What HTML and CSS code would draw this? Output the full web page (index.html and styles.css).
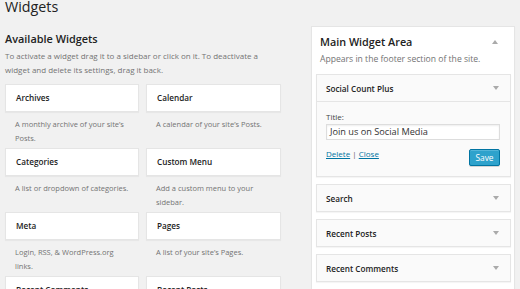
FILE: index.html
```html
<!DOCTYPE html>
<html>
<head>
<meta charset="utf-8">
<link rel="stylesheet" href="styles.css">
</head>
<body>
<h1 class="page-title">Widgets</h1>
<div class="columns">
  <div class="available">
    <h2 class="avail-title">Available Widgets</h2>
    <p class="avail-desc">To activate a widget drag it to a sidebar or click on it. To deactivate a widget and delete its settings, drag it back.</p>
    <div class="grid">
      <div class="item"><div class="card">Archives</div><div class="desc">A monthly archive of your site’s Posts.</div></div>
      <div class="item"><div class="card">Calendar</div><div class="desc">A calendar of your site’s Posts.</div></div>
      <div class="item"><div class="card">Categories</div><div class="desc">A list or dropdown of categories.</div></div>
      <div class="item"><div class="card">Custom Menu</div><div class="desc">Add a custom menu to your sidebar.</div></div>
      <div class="item"><div class="card">Meta</div><div class="desc">Login, RSS, &amp; WordPress.org links.</div></div>
      <div class="item"><div class="card">Pages</div><div class="desc">A list of your site’s Pages.</div></div>
      <div class="item"><div class="card">Recent Comments</div><div class="desc">Your site’s most recent comments.</div></div>
      <div class="item"><div class="card">Recent Posts</div><div class="desc">Your site’s most recent Posts.</div></div>
    </div>
  </div>
  <div class="sidebar">
    <div class="sb-head">
      <div class="sb-title-row"><h2 class="sb-title">Main Widget Area</h2><span class="arrow-up"></span></div>
      <p class="sb-desc">Appears in the footer section of the site.</p>
    </div>
    <div class="widget open">
      <div class="w-top"><span>Social Count Plus</span><span class="arrow-down"></span></div>
      <div class="w-body">
        <label class="w-label">Title:</label>
        <div class="w-input">Join us on Social Media</div>
        <div class="w-actions">
          <div class="links"><a href="#">Delete</a> | <a href="#">Close</a></div>
          <button class="save">Save</button>
        </div>
      </div>
    </div>
    <div class="widget"><div class="w-top"><span>Search</span><span class="arrow-down"></span></div></div>
    <div class="widget"><div class="w-top"><span>Recent Posts</span><span class="arrow-down"></span></div></div>
    <div class="widget"><div class="w-top"><span>Recent Comments</span><span class="arrow-down"></span></div></div>
    <div class="widget"><div class="w-top"><span>Archives</span><span class="arrow-down"></span></div></div>
  </div>
</div>
</body>
</html>
```
FILE: styles.css
```css
html, body {
  margin: 0;
  padding: 0;
  background: #f1f1f1;
  font-family: "Open Sans", "DejaVu Sans", sans-serif;
  color: #444;
  overflow: hidden;
  height: 289px;
}
body {
  padding-left: 5px;
}
.page-title {
  margin: 0;
  font-size: 14.3px;
  font-weight: 400;
  line-height: 14px;
  color: #222;
}
.columns {
  display: flex;
  margin-top: 12px;
  align-items: flex-start;
}
.available {
  width: 276px;
}
.avail-title {
  margin: 5px 0 0;
  font-size: 10.9px;
  font-weight: 600;
  line-height: 15px;
  color: #222;
}
.avail-desc {
  margin: 3px 0 0;
  font-size: 8px;
  line-height: 14px;
  color: #737373;
}
.grid {
  margin-top: 7px;
  display: grid;
  grid-template-columns: 134px 135px;
  column-gap: 7px;
}
.card {
  height: 26px;
  line-height: 26px;
  padding: 0 10px;
  background: #fff;
  border: 1px solid #e5e5e5;
  box-shadow: 0 1px 1px rgba(0,0,0,0.04);
  font-size: 8.2px;
  font-weight: 600;
  color: #222;
}
.desc {
  margin: 5px 0 3px;
  padding: 0 9px 0 10px;
  min-height: 28px;
  font-size: 7.5px;
  line-height: 14px;
  color: #737373;
}
.sidebar {
  margin-left: 30px;
  width: 195px;
  padding: 0 3px 0 4px;
  background: #fff;
  border: 1px solid #e5e5e5;
  box-shadow: 0 1px 1px rgba(0,0,0,0.04);
  height: 300px;
}
.sb-head {
  padding: 7px 10px 0 4px;
}
.sb-title-row {
  display: flex;
  justify-content: space-between;
  align-items: center;
}
.sb-title {
  margin: 0;
  font-size: 10.8px;
  font-weight: 600;
  line-height: 15px;
  color: #222;
}
.arrow-up {
  width: 0;
  height: 0;
  border-left: 3px solid transparent;
  border-right: 3px solid transparent;
  border-bottom: 4px solid #aaa;
  margin-right: 3px;
}
.sb-desc {
  margin: 3px 0 0;
  font-size: 8.6px;
  line-height: 14px;
  color: #737373;
}
.widget {
  margin-top: 7px;
  background: #fafafa;
  border: 1px solid #e5e5e5;
  box-shadow: 0 1px 1px rgba(0,0,0,0.04);
}
.sb-head + .widget {
  margin-top: 8px;
}
.w-top {
  height: 26px;
  padding: 0 11px 0 9px;
  display: flex;
  justify-content: space-between;
  align-items: center;
  font-size: 8.2px;
  font-weight: 600;
  color: #222;
}
.arrow-down {
  width: 0;
  height: 0;
  border-left: 3px solid transparent;
  border-right: 3px solid transparent;
  border-top: 4px solid #aaa;
}
.w-body {
  border-top: 1px solid #e5e5e5;
  padding: 9px 10px 10px 9px;
}
.w-label {
  display: block;
  font-size: 8px;
  line-height: 12px;
  color: #444;
}
.w-input {
  margin-top: 1px;
  height: 14px;
  line-height: 14px;
  padding: 0 3px;
  border: 1px solid #ddd;
  background: #fff;
  box-shadow: inset 0 1px 2px rgba(0,0,0,0.07);
  font-size: 9.2px;
  color: #333;
}
.w-actions {
  margin-top: 7px;
  display: flex;
  justify-content: space-between;
  align-items: flex-start;
}
.links {
  font-size: 8px;
  line-height: 14px;
  color: #666;
}
.links a {
  color: #0074a2;
  text-decoration: underline;
}
.save {
  margin-top: 2px;
  height: 17px;
  width: 31px;
  padding: 0;
  background: #2ea2cc;
  border: 1px solid #0074a2;
  border-radius: 2px;
  box-shadow: inset 0 1px 0 rgba(120,200,230,0.5), 0 1px 0 rgba(0,0,0,0.15);
  color: #fff;
  font-family: "Open Sans", "DejaVu Sans", sans-serif;
  font-size: 8.4px;
  line-height: 15px;
}
```
